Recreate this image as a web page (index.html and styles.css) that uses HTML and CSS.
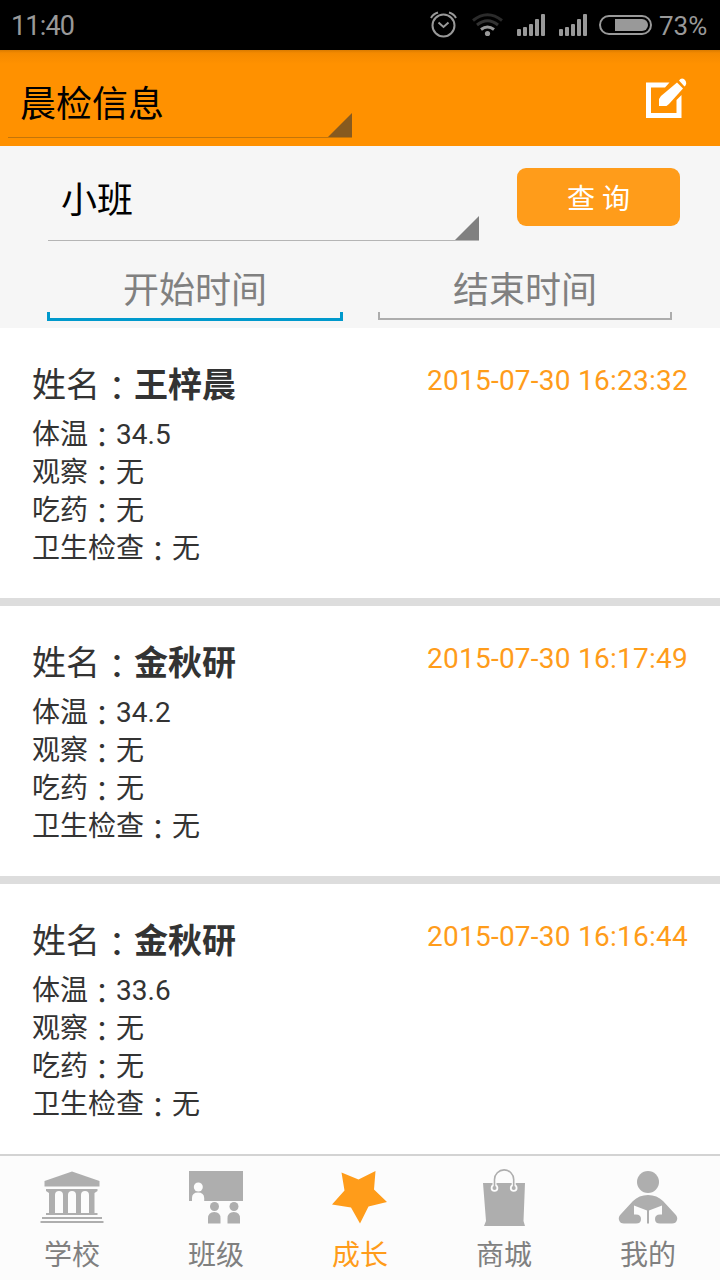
FILE: index.html
```
<!DOCTYPE html>
<html lang="zh-CN">
<head>
    <meta charset="UTF-8">
    <meta name="viewport" content="width=device-width, initial-scale=1.0">
    <title>晨检信息</title>
    <link rel="stylesheet" href="styles.css">
</head>
<body>

<div class="status-bar">
    <span class="clock">11:40</span>
    <svg class="status-icons" width="225" height="50" viewBox="428 0 225 50">
        <g fill="none" stroke="#999" stroke-width="2">
            <circle cx="443.500" cy="25.500" r="11"/>
            <path d="M438.500 22.500l5 4.500 5-4.500"/>
            <path d="M431 18q2-4 7-5.500M456 18q-2-4-7-5.500"/>
        </g>
        <g fill="none" stroke-width="3">
            <path d="M473 20.500q14.500-11.500 29 0" stroke="#2b2b2b"/>
            <path d="M477 25q10.500-8.500 21 0" stroke="#333"/>
            <path d="M481 29.500q6.500-5 13 0" stroke="#999"/>
        </g>
        <circle cx="487.500" cy="33.500" r="2.600" fill="#999"/>
        <g fill="#999">
            <rect x="517" y="29" width="4" height="7" rx="1"/>
            <rect x="523" y="27" width="4" height="9" rx="1"/>
            <rect x="529" y="24" width="4" height="12" rx="1"/>
            <rect x="535" y="19" width="4" height="17" rx="1"/>
            <rect x="541" y="14" width="4" height="22" rx="1"/>
            <rect x="559" y="29" width="4" height="7" rx="1"/>
            <rect x="565" y="27" width="4" height="9" rx="1"/>
            <rect x="571" y="24" width="4" height="12" rx="1"/>
            <rect x="577" y="19" width="4" height="17" rx="1"/>
            <rect x="583" y="14" width="4" height="22" rx="1"/>
            <path d="M615 19h27a6 6 0 0 1 0 12h-27z"/>
        </g>
        <rect x="600" y="16" width="51" height="18" rx="9" fill="none" stroke="#999" stroke-width="2"/>
    </svg>
    <span class="battery">73%</span>
</div>

<div class="header">
    <div class="spinner title-spinner"><span>晨检信息</span></div>
    <svg class="edit-icon" width="42" height="42" viewBox="645 78 42 42">
        <path d="M669.500 82.500H646v35.500h35.500V95l-5 5v13h-25.500V87.500h14z" fill="#fff"/>
        <path d="M677 82.500l6 6-14 15.500-2.500 2H659v-7l2-3z" fill="#fff"/>
        <path d="M679 80.500q2-3 5-1.500 3.500 3 1.500 6.500l-1 1z" fill="#fff"/>
    </svg>
</div>

<div class="filter">
    <div class="filter-row">
        <div class="spinner class-spinner"><span>小班</span></div>
        <button class="query-button">查 询</button>
    </div>
    <div class="dates">
        <div class="date-field active"><span>开始时间</span></div>
        <div class="date-field"><span>结束时间</span></div>
    </div>
</div>

<div class="list">
    <div class="card">
        <div class="card-head">
            <div class="name">姓名<i lang="zh-TW">：</i><b>王梓晨</b></div>
            <div class="time">2015-07-30 16:23:32</div>
        </div>
        <p>体温<i lang="zh-TW">：</i>34.5</p>
        <p>观察<i lang="zh-TW">：</i>无</p>
        <p>吃药<i lang="zh-TW">：</i>无</p>
        <p>卫生检查<i lang="zh-TW">：</i>无</p>
    </div>
    <div class="card">
        <div class="card-head">
            <div class="name">姓名<i lang="zh-TW">：</i><b>金秋研</b></div>
            <div class="time">2015-07-30 16:17:49</div>
        </div>
        <p>体温<i lang="zh-TW">：</i>34.2</p>
        <p>观察<i lang="zh-TW">：</i>无</p>
        <p>吃药<i lang="zh-TW">：</i>无</p>
        <p>卫生检查<i lang="zh-TW">：</i>无</p>
    </div>
    <div class="card">
        <div class="card-head">
            <div class="name">姓名<i lang="zh-TW">：</i><b>金秋研</b></div>
            <div class="time">2015-07-30 16:16:44</div>
        </div>
        <p>体温<i lang="zh-TW">：</i>33.6</p>
        <p>观察<i lang="zh-TW">：</i>无</p>
        <p>吃药<i lang="zh-TW">：</i>无</p>
        <p>卫生检查<i lang="zh-TW">：</i>无</p>
    </div>
</div>

<div class="tab-bar">
    <div class="tab">
        <svg width="72" height="64" viewBox="36 1164 72 64" fill="#aeaeae">
            <path d="M72 1171.500l27.500 9.500v5.500h-55V1181z"/>
            <path d="M46 1189h51.500v2l-3 2V1213h3v2H46v-2h3V1193l-3-2zM55 1213h8v-18q0-4-4-4t-4 4zM68 1213h8v-18q0-4-4-4t-4 4zM81 1213h8v-18q0-4-4-4t-4 4z" fill-rule="evenodd"/>
            <rect x="42" y="1217" width="60" height="2"/>
            <rect x="40.500" y="1221" width="63" height="2"/>
        </svg>
        <span>学校</span>
    </div>
    <div class="tab">
        <svg width="72" height="64" viewBox="180 1164 72 64" fill="#aeaeae">
            <rect x="189" y="1171" width="54" height="30"/>
            <circle cx="198.300" cy="1187" r="4.500" fill="#fcfcfc"/>
            <path d="M192 1201v-3q0-5.500 6-5.500t6.200 5.500v3z" fill="#fcfcfc"/>
            <circle cx="214.500" cy="1206.500" r="4.500"/>
            <path d="M208 1223.500v-5q0-6.500 6.300-6.500t6.200 6.500v5z"/>
            <circle cx="234" cy="1206.500" r="4.500"/>
            <path d="M227.500 1223.500v-5q0-6.500 6.300-6.500t6.200 6.500v5z"/>
        </svg>
        <span>班级</span>
    </div>
    <div class="tab selected">
        <svg width="72" height="64" viewBox="324 1164 72 64" fill="#ff9c1a">
            <path d="M341.500 1172.500l17 7 17-8.500-1.500 18.500 13 12.500-18.500 4.500-8.500 17-9-16-19-3 12.500-14z"/>
        </svg>
        <span>成长</span>
    </div>
    <div class="tab">
        <svg width="72" height="64" viewBox="468 1164 72 64">
            <path d="M483 1183h42l-1.500 38 1.500 5h-41l2-5z" fill="#aeaeae"/>
            <circle cx="494.500" cy="1188" r="3.800" fill="#fcfcfc"/>
            <circle cx="513.700" cy="1188" r="3.800" fill="#fcfcfc"/>
            <path d="M494.500 1188v-8.500a9.600 9.600 0 0 1 19.200 0v8.500" fill="none" stroke="#fcfcfc" stroke-width="4"/>
            <path d="M494.500 1188v-8.500a9.600 9.600 0 0 1 19.200 0v8.500" fill="none" stroke="#aeaeae" stroke-width="1.600"/>
            <circle cx="494.500" cy="1188" r="2" fill="#aeaeae"/>
            <circle cx="513.700" cy="1188" r="2" fill="#aeaeae"/>
        </svg>
        <span>商城</span>
    </div>
    <div class="tab">
        <svg width="72" height="64" viewBox="612 1164 72 64" fill="#aeaeae">
            <circle cx="648" cy="1182" r="11"/>
            <path d="M648 1195q9 0 15 6l12 13q3 3 2 6-1 3.500-5 3.500h-12q-5 0-5-4.500t5-4.500h2v-9l-13 5v13h-2v-13l-13-5v9h2q5 0 5 4.500t-5 4.500h-12q-4 0-5-3.500-1-3 2-6l12-13q6-6 15-6z"/>
        </svg>
        <span>我的</span>
    </div>
</div>

</body>
</html>
```
FILE: styles.css
```
* {
    box-sizing: border-box;
}

body {
    margin: 0;
    width: 720px;
    height: 1280px;
    overflow: hidden;
    display: flex;
    flex-direction: column;
    background-color: #fff;
    color: #333;
    font-family: Roboto, "Noto Sans CJK SC", sans-serif;
}

.status-bar {
    height: 50px;
    background-color: #000;
    color: #999;
    display: flex;
    align-items: center;
    padding: 0 12px 0 11px;
    font-size: 27px;
    line-height: 48px;
}

.status-bar span {
    padding-top: 2px;
}

.clock {
    letter-spacing: -0.8px;
}

.status-icons {
    margin-left: auto;
    margin-right: 6px;
}

.battery {
    font-size: 26px;
    width: 49px;
}

.header {
    height: 96px;
    background: linear-gradient(#d97b00 0, #f48a00 3px, #ff9100 14px);
    display: flex;
    justify-content: space-between;
    padding: 0 33px 0 8px;
}

.edit-icon {
    margin-top: 28px;
}

/* dropdown with the small corner triangle */
.spinner {
    display: flex;
    justify-content: space-between;
    align-items: flex-end;
    font-size: 36px;
    color: #000;
    border-bottom: 1px solid #b5b5b5;
}

.spinner::after {
    content: "";
    width: 24px;
    height: 24px;
    background-color: #808080;
    clip-path: polygon(100% 0, 100% 100%, 0 100%);
}

.title-spinner {
    width: 344px;
    height: 88px;
    padding-left: 12px;
    border-color: #c47509;
}

.title-spinner::after {
    background-color: #875a1f;
}

.title-spinner span {
    line-height: 52px;
    margin-bottom: 6px;
}

.filter {
    height: 182px;
    background-color: #f6f6f6;
}

.filter-row {
    display: flex;
    justify-content: space-between;
    padding: 0 40px 0 48px;
}

.class-spinner {
    width: 431px;
    height: 95px;
    padding-left: 13px;
}

.class-spinner span {
    line-height: 52px;
    margin-bottom: 13px;
}

.query-button {
    width: 163px;
    height: 58px;
    margin-top: 22px;
    padding: 5px 0 0;
    border: none;
    border-radius: 9px;
    background-color: #ff9c1a;
    color: #fff;
    font-family: inherit;
    font-size: 28px;
    line-height: 53px;
}

.dates {
    display: flex;
    justify-content: space-between;
    padding: 29px 48px 0 47px;
}

.date-field {
    width: 294px;
    text-align: center;
    font-size: 36px;
    line-height: 42px;
    color: #808080;
}

.date-field span {
    display: block;
}

.date-field::after {
    content: "";
    display: block;
    height: 6px;
    border: 2px solid #adadad;
    border-top: none;
}

.date-field.active {
    width: 296px;
}

.date-field.active::after {
    border-color: #0099cc;
    border-width: 0 3px 3px;
}

.card {
    height: 278px;
    padding: 32px 32px 0;
    border-bottom: 8px solid #ddd;
}

.card:last-child {
    height: 270px;
    border-bottom: none;
}

.card-head {
    display: flex;
    justify-content: space-between;
    height: 56px;
}

.name {
    font-size: 34px;
    line-height: 50px;
}

.time {
    font-size: 28px;
    line-height: 41px;
    letter-spacing: 0.25px;
    color: #ff9c1a;
}

.card p {
    margin: 0;
    font-size: 28px;
    line-height: 38px;
}

/* centred full-width colon */
.card i {
    font-family: "Noto Sans CJK TC", sans-serif;
    font-style: normal;
    line-height: 0;
    vertical-align: -4px;
}

.tab-bar {
    height: 126px;
    border-top: 2px solid #d3d3d3;
    background-color: #fcfcfc;
    display: flex;
}

.tab {
    flex: 1;
    display: flex;
    flex-direction: column;
    align-items: center;
    padding-top: 8px;
    font-size: 28px;
    line-height: 40px;
    color: #808080;
}

.tab span {
    margin-top: 8px;
}

.tab.selected {
    color: #ff9c1a;
}
```
